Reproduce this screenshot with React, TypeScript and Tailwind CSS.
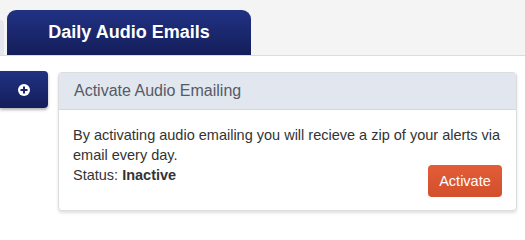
import { useState } from "react";

export default function App() {
  const [active, setActive] = useState(false);

  return (
    <div className="w-[525px] h-[228px] bg-white overflow-hidden" style={{ fontFamily: '"Liberation Sans", Arial, sans-serif' }}>
      {/* Tabs */}
      <div className="h-[56px] bg-[#f4f4f4] border-b border-[#dcdcdc] flex items-end gap-[3px]">
        <div className="w-[4px] h-[35px] bg-[#e3e6ee] rounded-tr-[6px]" />
        <div className="w-[244px] h-[45px] rounded-t-[9px] bg-gradient-to-b from-[#213284] to-[#141e5a] flex items-center justify-center">
          <span className="text-white font-bold text-[18px]">Daily Audio Emails</span>
        </div>
      </div>

      <div className="flex items-start pt-[15px] gap-[10px]">
        {/* Side button */}
        <button className="w-[48px] h-[37px] rounded-r-[4px] bg-gradient-to-b from-[#213284] to-[#141e5a] shadow-[0_2px_3px_rgba(0,0,0,0.3)] flex items-center justify-center">
          <svg width="12" height="12" viewBox="0 0 12 12">
            <circle cx="6" cy="6" r="6" fill="#fff" />
            <rect x="5" y="2.5" width="2" height="7" fill="#18226a" />
            <rect x="2.5" y="5" width="7" height="2" fill="#18226a" />
          </svg>
        </button>

        {/* Panel */}
        <div className="mt-[1px] w-[459px] border border-[#dddddd] rounded-[4px] bg-white shadow-[0_2px_3px_rgba(0,0,0,0.12)] overflow-hidden">
          <div className="h-[37px] bg-[#e2e6ef] border-b border-[#d3d7df] flex items-center px-[15px]">
            <h3 className="text-[16px] text-[#555a66]">Activate Audio Emailing</h3>
          </div>
          <div className="px-[14px] pt-[15px] pb-[13px] text-[14.5px] leading-[20px] text-[#333]">
            <p>By activating audio emailing you will recieve a zip of your alerts via<br />email every day.</p>
            <p>Status: <b>{active ? "Active" : "Inactive"}</b></p>
            <div className="flex justify-end -mt-[20px]">
              <button onClick={() => setActive(!active)} className="w-[74px] h-[32px] rounded-[4px] bg-gradient-to-b from-[#e25c37] to-[#d3502d] text-white text-[14.5px]">
                Activate
              </button>
            </div>
          </div>
        </div>
      </div>
    </div>
  );
}
